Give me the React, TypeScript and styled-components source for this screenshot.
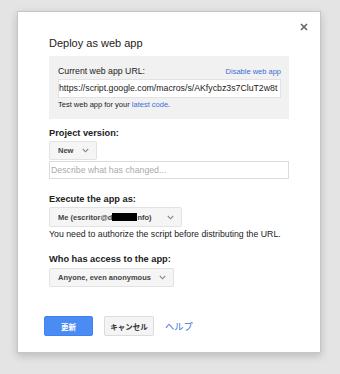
import React from "react";
import styled, { createGlobalStyle } from "styled-components";

const Global = createGlobalStyle`
  html, body { margin: 0; padding: 0; }
  body {
    background: #e4e4e4;
    font-family: "Liberation Sans", Arial, "Noto Sans CJK JP", sans-serif;
    color: #222;
    width: 340px;
    height: 374px;
    overflow: hidden;
  }
`;

const Page = styled.div`
  padding: 11px 0 0 17px;
`;

const Dialog = styled.div`
  position: relative;
  box-sizing: border-box;
  width: 304px;
  height: 342px;
  background: #fff;
  border: 1px solid #c6c6c6;
  box-shadow: 0 3px 8px rgba(0, 0, 0, 0.18);
  padding: 25px 31px 0 31px;
  display: flex;
  flex-direction: column;
`;

const Close = styled.button`
  position: absolute;
  top: 9px;
  right: 10px;
  width: 12px;
  height: 12px;
  padding: 0;
  border: 0;
  background: transparent;
  display: flex;
  align-items: center;
  justify-content: center;
`;

const Title = styled.h1`
  margin: 0;
  font-size: 11px;
  line-height: 13px;
  font-weight: normal;
  color: #222;
`;

const UrlBox = styled.div`
  margin-top: 6px;
  background: #f1f1f1;
  padding: 10px 8px 10px 9px;
  display: flex;
  flex-direction: column;
`;

const UrlHead = styled.div`
  display: flex;
  justify-content: space-between;
  align-items: baseline;
`;

const UrlLabel = styled.span`
  font-size: 8.75px;
  line-height: 11px;
  color: #222;
`;

const Link = styled.a<{ $size?: number }>`
  font-size: ${(p) => p.$size ?? 7.5}px;
  color: #3a6fd8;
  text-decoration: none;
  cursor: pointer;
`;

const UrlInput = styled.div`
  margin-top: 2px;
  height: 19px;
  box-sizing: border-box;
  background: #fff;
  border: 1px solid #e2e2e2;
  font-size: 8.75px;
  line-height: 17px;
  color: #222;
  white-space: nowrap;
  overflow: hidden;
`;

const Note = styled.div`
  margin-top: 2px;
  font-size: 7.5px;
  line-height: 9px;
  color: #222;
`;

const Label = styled.div<{ $top: number }>`
  margin-top: ${(p) => p.$top}px;
  font-size: 9.25px;
  line-height: 11px;
  font-weight: bold;
  color: #222;
`;

const Select = styled.div<{ $width: number; $top: number; $height: number }>`
  margin-top: ${(p) => p.$top}px;
  width: ${(p) => p.$width}px;
  height: ${(p) => p.$height}px;
  box-sizing: border-box;
  background: #f5f5f5;
  border: 1px solid #e2e2e2;
  border-radius: 2px;
  display: flex;
  align-items: center;
  justify-content: space-between;
  padding: 0 7px 0 8px;
  font-size: 7.5px;
  font-weight: bold;
  color: #444;
  white-space: nowrap;
`;

const Redact = styled.span`
  display: inline-block;
  width: 25px;
  height: 8px;
  background: #000;
  vertical-align: -1px;
`;

const TextInput = styled.div`
  margin-top: 1px;
  width: 240px;
  height: 18px;
  box-sizing: border-box;
  border: 1px solid #dcdcdc;
  padding: 0 1px;
  font-size: 8.75px;
  line-height: 16px;
  color: #aaa;
`;

const Hint = styled.div`
  margin-top: 2px;
  font-size: 8.75px;
  line-height: 11px;
  color: #222;
  white-space: nowrap;
`;

const Buttons = styled.div`
  margin-top: 29px;
  margin-left: -5px;
  display: flex;
  align-items: center;
  gap: 11px;
`;

const Button = styled.button<{ $primary?: boolean }>`
  height: 20px;
  width: ${(p) => (p.$primary ? 49 : 50)}px;
  box-sizing: border-box;
  border-radius: 2px;
  border: 1px solid ${(p) => (p.$primary ? "#3f84ee" : "#dcdcdc")};
  background: ${(p) => (p.$primary ? "#4a8cf3" : "#f4f4f4")};
  color: ${(p) => (p.$primary ? "#fff" : "#333")};
  font-family: "Liberation Sans", Arial, "Noto Sans CJK JP", sans-serif;
  font-size: 7.5px;
  font-weight: bold;
  padding: 0;
  display: flex;
  align-items: center;
  justify-content: center;
`;

const Chevron = () => (
  <svg width="7" height="5" viewBox="0 0 7 5">
    <path d="M0.8 1 L3.5 3.8 L6.2 1" fill="none" stroke="#888" strokeWidth="1.1" />
  </svg>
);

export default function App() {
  return (
    <>
      <Global />
      <Page>
        <Dialog>
          <Close aria-label="Close">
            <svg width="8" height="8" viewBox="0 0 8 8">
              <path d="M1 1 L7 7 M7 1 L1 7" stroke="#666" strokeWidth="1.6" />
            </svg>
          </Close>
          <Title>Deploy as web app</Title>
          <UrlBox>
            <UrlHead>
              <UrlLabel>Current web app URL:</UrlLabel>
              <Link>Disable web app</Link>
            </UrlHead>
            <UrlInput>https://script.google.com/macros/s/AKfycbz3s7CluT2w8t</UrlInput>
            <Note>
              Test web app for your <Link>latest code</Link>.
            </Note>
          </UrlBox>
          <Label $top={9}>Project version:</Label>
          <Select $width={48} $top={2} $height={19}>
            <span>New</span>
            <Chevron />
          </Select>
          <TextInput>Describe what has changed...</TextInput>
          <Label $top={15}>Execute the app as:</Label>
          <Select $width={133} $top={2} $height={20}>
            <span>
              Me (escritor@d<Redact />nfo)
            </span>
            <Chevron />
          </Select>
          <Hint>You need to authorize the script before distributing the URL.</Hint>
          <Label $top={14}>Who has access to the app:</Label>
          <Select $width={125} $top={3} $height={19}>
            <span>Anyone, even anonymous</span>
            <Chevron />
          </Select>
          <Buttons>
            <Button $primary>更新</Button>
            <Button>キャンセル</Button>
            <Link $size={9.25}>ヘルプ</Link>
          </Buttons>
        </Dialog>
      </Page>
    </>
  );
}
